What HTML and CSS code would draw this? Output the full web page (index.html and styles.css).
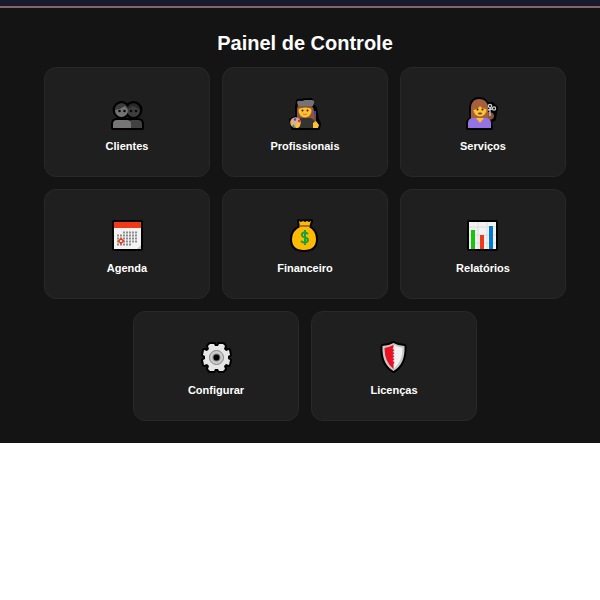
FILE: index.html
```html
<!DOCTYPE html>
<html lang="pt-BR">
<head>
    <meta charset="UTF-8">
    <meta name="viewport" content="width=device-width, initial-scale=1.0">
    <title>Painel de Controle</title>
    <link rel="stylesheet" href="styles.css">
</head>
<body>
    <header class="topbar"></header>
    <main class="painel">
        <h1>Painel de Controle</h1>
        <nav class="cards">
            <a class="card" href="#clientes">
                <svg class="icon" viewBox="0 0 45 45" aria-hidden="true">
                    <g class="outline">
                        <circle cx="16.5" cy="20" r="7"/>
                        <circle cx="28.5" cy="20" r="7"/>
                        <path d="M8 38v-4q0-4 4-4h21q4 0 4 4v4z"/>
                    </g>
                    <circle cx="28.5" cy="20.5" r="6.5" fill="#3d3d3d"/>
                    <path d="M22 20c0-9 13-9 13 0l-4-3-4-1z" fill="#282828"/>
                    <path d="M23 38v-4q0-4 4-4h6q4 0 4 4v4z" fill="#424242"/>
                    <circle cx="16.5" cy="20.5" r="6.5" fill="#737373"/>
                    <path d="M10 20c0-9 13-9 13 0l-3-4q-4 3-10 4z" fill="#3b3b3b"/>
                    <path d="M8 38v-4q0-4 4-4h10q4 0 4 4v4z" fill="#767676"/>
                    <g fill="#080808">
                        <circle cx="14.5" cy="21" r="1.3"/>
                        <circle cx="19.5" cy="21" r="1.3"/>
                        <circle cx="26" cy="21" r="1.3"/>
                        <circle cx="31" cy="21" r="1.3"/>
                    </g>
                </svg>
                <span>Clientes</span>
            </a>
            <a class="card" href="#profissionais">
                <svg class="icon" viewBox="0 0 45 45" aria-hidden="true">
                    <path class="outline" d="M16 11l13-1 1 5q4 3 4 8l1 6 2 5-1 4H11l-2-8 6-3V17z"/>
                    <path d="M15 31V19q0-5 8-5t9 6v11z" fill="#8c5438"/>
                    <path d="M16 38v-6q0-4 5-4h6q5 0 5 4v6z" fill="#333"/>
                    <circle cx="23" cy="21" r="6.5" fill="#ffc12e"/>
                    <path d="M16 19q2-5 7-5t8 5q-8-3-15 0z" fill="#8c5438"/>
                    <path d="M15 12q1-2 4-1 2 0 4-1l7 0q3 1 2 3l-1 3H16z" fill="#747474"/>
                    <circle cx="20.5" cy="20.5" r="1" fill="#292018"/>
                    <circle cx="25.5" cy="20.5" r="1" fill="#292018"/>
                    <path d="M21 24q2 1.500 4 0" fill="none" stroke="#ce7941"/>
                    <circle cx="13.5" cy="32.5" r="5.3" fill="#dfab92"/>
                    <circle cx="13" cy="29.5" r="1.2" fill="#1757ee"/>
                    <circle cx="17" cy="31" r="1.2" fill="#ed2929"/>
                    <circle cx="10" cy="32" r="1.2" fill="#f6bb24"/>
                    <circle cx="11.5" cy="36" r="1.2" fill="#21a645"/>
                    <path d="M14 34q3-3 4 0v2l-2 2h-2z" fill="#ffc12e"/>
                    <path d="M33 24v10" stroke="#e39a72"/>
                    <path d="M33 21v3" stroke="#1646e5" stroke-width="2"/>
                    <path d="M31 33l3-2 3 4-1 3h-5z" fill="#ffc12e"/>
                </svg>
                <span>Profissionais</span>
            </a>
            <a class="card" href="#servicos">
                <svg class="icon" viewBox="0 0 45 45" aria-hidden="true">
                    <path class="outline" d="M11 29V17q1-8 8-8 7 0 9 8l1-3h3l4 4-1 4-1 7-4 2 1 7H8v-6z"/>
                    <path d="M11 31V17q1-8 8-8 8 0 9 8v13z" fill="#a75e3c"/>
                    <path d="M28 22q6 0 6 4t-6 4z" fill="#8c5438"/>
                    <circle cx="20" cy="20" r="6.5" fill="#ffc12e"/>
                    <path d="M13 20q0-7 7-7 6 0 7 6-5 0-7-3-2 3-7 4z" fill="#a75e3c"/>
                    <circle cx="17.5" cy="19.5" r="1" fill="#292018"/>
                    <circle cx="22.5" cy="19.5" r="1" fill="#292018"/>
                    <ellipse cx="20" cy="23.500" rx="2" ry="1" fill="#58402b"/>
                    <path d="M8 38v-5q0-5 6-5h11q6 0 6 5v5z" fill="#9474e4"/>
                    <path d="M16 28l4 5 4-5z" fill="#ffc12e"/>
                    <g fill="none" stroke="#c9d1d3" stroke-width="1.3">
                        <circle cx="30" cy="16" r="1.6"/>
                        <circle cx="34" cy="18.500" r="1.6"/>
                        <path d="M30 18v8M32 19l-4 1"/>
                    </g>
                </svg>
                <span>Serviços</span>
            </a>
            <a class="card" href="#agenda">
                <svg class="icon" viewBox="0 -1 45 45" aria-hidden="true">
                    <path class="outline" d="M9 9h27v27H9z"/>
                    <path d="M9 9h27v27H9z" fill="#f2f2f2"/>
                    <path d="M9 9h27v6H9z" fill="#f03a17"/>
                    <path d="M18 19.500h15M12 22.500h21M12 25.500h21M12 28.500h21M12 31.500h15" stroke="#8c8c8c" stroke-width="2" stroke-dasharray="2 1"/>
                    <path d="M16 25.500l2.500 2.500L16 30.500l-2.500-2.500z" fill="#fff" stroke="#f03a17" stroke-width="1.500"/>
                    <path d="M36 32v4h-4z" fill="#c8c8c8"/>
                </svg>
                <span>Agenda</span>
            </a>
            <a class="card" href="#financeiro">
                <svg class="icon" viewBox="0 -1 45 45" aria-hidden="true">
                    <path class="outline" d="M17 8l2 1 2-1 2 1 2-1 2 1 2-1-2 6q7 4 7 12 0 11-12 11t-12-11q0-8 8-12z"/>
                    <path d="M17 8l2 1 2-1 2 1 2-1 2 1 2-1-2 6q7 4 7 12 0 11-12 11t-12-11q0-8 8-12z" fill="#ffb900"/>
                    <path d="M17 13h11" stroke="#8d562e" stroke-width="1.500"/>
                    <path d="M26 21q-2-2-4-1.500c-3 1-3 4 1 5s4 4 0 5q-2 .5-4-1.500M23 17v15" fill="none" stroke="#16a33b" stroke-width="2"/>
                </svg>
                <span>Financeiro</span>
            </a>
            <a class="card" href="#relatorios">
                <svg class="icon" viewBox="0 -1 45 45" aria-hidden="true">
                    <path class="outline" d="M9 9h27v27H9z"/>
                    <path d="M9 9h27v27H9z" fill="#f2f2f2"/>
                    <path d="M9 14h27M9 22h27M9 30h27M18 9v27M27 9v27" stroke="#dedede"/>
                    <path d="M11 17h4v19h-4z" fill="#16c60c"/>
                    <path d="M20 22h4v14h-4z" fill="#f03a17"/>
                    <path d="M29 13h4v23h-4z" fill="#0078d7"/>
                </svg>
                <span>Relatórios</span>
            </a>
            <a class="card" href="#configurar">
                <svg class="icon" viewBox="0 -1 45 45" aria-hidden="true">
                    <path class="outline" d="M16 9h4l1 2h3l1-2h4l2 2-1 3 2 2 3-1 1 5-2 1v3l2 1-1 5-3-1-2 2 1 3-2 2h-4l-1-2h-3l-1 2h-4l-2-2 1-3-2-2-3 1-1-5 2-1v-3l-2-1 1-5 3 1 2-2-1-3z"/>
                    <path d="M16 9h4l1 2h3l1-2h4l2 2-1 3 2 2 3-1 1 5-2 1v3l2 1-1 5-3-1-2 2 1 3-2 2h-4l-1-2h-3l-1 2h-4l-2-2 1-3-2-2-3 1-1-5 2-1v-3l-2-1 1-5 3 1 2-2-1-3z" fill="#e6e6e6"/>
                    <circle cx="22.5" cy="22.5" r="7" fill="#ccc" stroke="#858585"/>
                    <circle cx="22.5" cy="22.5" r="4" fill="#858585"/>
                    <circle cx="22.5" cy="22.5" r="3" fill="#050505"/>
                </svg>
                <span>Configurar</span>
            </a>
            <a class="card" href="#licencas">
                <svg class="icon" viewBox="0 -1 45 45" aria-hidden="true">
                    <path class="outline" d="M22.500 8q5 3 11 3 1 18-11 25-12-7-11-25 6 0 11-3z"/>
                    <path d="M22.500 8q5 3 11 3 1 18-11 25-12-7-11-25 6 0 11-3z" fill="#c8c8c8"/>
                    <path d="M22.500 10q4 2 9 3 0 14-9 21z" fill="#f2f2f2"/>
                    <path d="M22.500 10v2l-1 2 2 1-2 2 2 1-2 2 2 1-2 2 2 1-2 2 2 1-1 2v5q-9-7-9-21 5-1 9-3z" fill="#e81224"/>
                </svg>
                <span>Licenças</span>
            </a>
        </nav>
    </main>
</body>
</html>
```
FILE: styles.css
```css
* {
    box-sizing: border-box;
}
body {
    margin: 0;
    background-color: #fff;
    font-family: Arial, "Liberation Sans", sans-serif;
}
.topbar {
    height: 8px;
    background-color: #1a1a2e;
    border-bottom: 2px solid #84685f;
}
.painel {
    background-color: #141414;
    padding: 24px 34px 22px 44px;
}
h1 {
    margin: 0 0 12px;
    color: #fff;
    font-size: 20px;
    line-height: 23px;
    text-align: center;
}
.cards {
    display: flex;
    flex-wrap: wrap;
    justify-content: center;
    gap: 12px;
}
.card {
    display: flex;
    flex-direction: column;
    align-items: center;
    justify-content: center;
    gap: 4px;
    width: calc((100% - 24px) / 3);
    height: 110px;
    padding-bottom: 2px;
    background-color: #1f1f1f;
    border: 1px solid #282828;
    border-radius: 12px;
    color: #fff;
    font-size: 11px;
    font-weight: bold;
    line-height: 14px;
    text-decoration: none;
}
.card:hover {
    background-color: #292929;
}
.icon {
    width: 45px;
    height: 45px;
}
.outline {
    fill: #000;
    stroke: #000;
    stroke-width: 4px;
    stroke-linejoin: round;
}
```
